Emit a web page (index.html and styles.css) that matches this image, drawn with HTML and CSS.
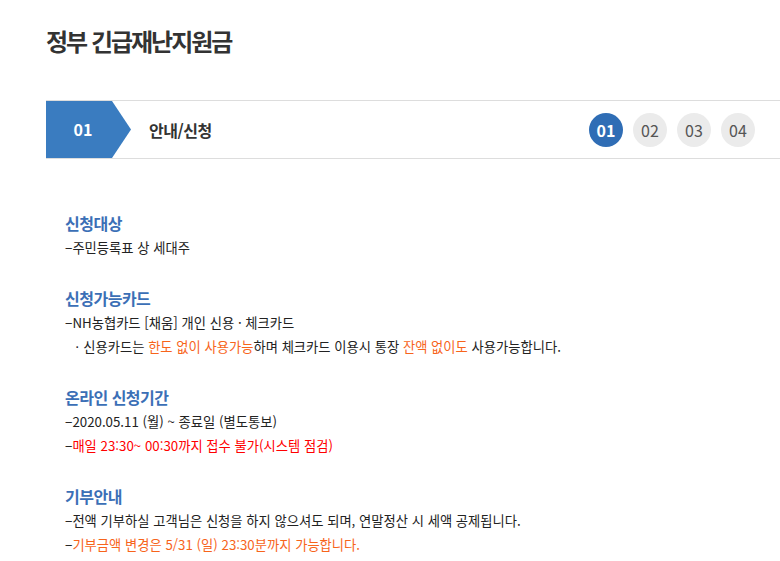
FILE: index.html
```html
<!DOCTYPE html>
<html lang="ko">
<head>
    <meta charset="utf-8" />
    <title>정부 긴급재난지원금</title>
    <link rel="stylesheet" href="styles.css">
</head>
<body>
    <div class="wrap">
        <h1 class="page-title">정부 긴급재난지원금</h1>

        <div class="step-bar">
            <div class="step-no">01</div>
            <div class="step-name">안내/신청</div>
            <ul class="step-list">
                <li class="on">01</li>
                <li>02</li>
                <li>03</li>
                <li>04</li>
            </ul>
        </div>

        <div class="guide">
            <div class="sec">
                <h2>신청대상</h2>
                <p>−주민등록표 상 세대주</p>
            </div>
            <div class="sec">
                <h2>신청가능카드</h2>
                <p>−NH농협카드 [채움] 개인 신용 · 체크카드</p>
                <p class="sub">ㆍ신용카드는 <span class="orange">한도 없이 사용가능</span>하며 체크카드 이용시 통장 <span class="orange">잔액 없이도</span> 사용가능합니다.</p>
            </div>
            <div class="sec">
                <h2>온라인 신청기간</h2>
                <p>−2020.05.11 (월) ~ 종료일 (별도통보)</p>
                <p>−<span class="red">매일 23:30~ 00:30까지 접수 불가(시스템 점검)</span></p>
            </div>
            <div class="sec">
                <h2>기부안내</h2>
                <p>−전액 기부하실 고객님은 신청을 하지 않으셔도 되며, 연말정산 시 세액 공제됩니다.</p>
                <p>−<span class="orange">기부금액 변경은 5/31 (일) 23:30분까지 가능합니다.</span></p>
            </div>
        </div>
    </div>
</body>
</html>
```

FILE: styles.css
```css
body {
    margin: 0;
    font-family: "Noto Sans CJK KR", "Noto Sans", sans-serif;
    color: #222;
    background: #fff;
}

.wrap {
    padding: 24px 0 0 46px;
}

.page-title {
    margin: 0 0 42px 0;
    font-size: 24px;
    line-height: 34px;
    font-weight: bold;
    letter-spacing: -2px;
    color: #333;
}

.step-bar {
    display: flex;
    align-items: center;
    height: 57px;
    border-top: 1px solid #ddd;
    border-bottom: 1px solid #ddd;
}

.step-no {
    width: 74px;
    padding-right: 11px;
    height: 57px;
    line-height: 57px;
    text-align: center;
    background-color: #3a7cc0;
    clip-path: polygon(0 0, 66px 0, 85px 50%, 66px 100%, 0 100%);
    color: #fff;
    font-size: 16px;
    font-weight: bold;
}

.step-name {
    margin-left: 18px;
    font-size: 16px;
    font-weight: bold;
    letter-spacing: -0.5px;
    color: #333;
}

.step-list {
    display: flex;
    gap: 10px;
    margin: 0 0 0 auto;
    padding: 0 25px 0 0;
    list-style: none;
}

.step-list li {
    width: 34px;
    height: 34px;
    border-radius: 50%;
    background-color: #ebebeb;
    color: #555;
    font-size: 16px;
    line-height: 34px;
    text-align: center;
}

.step-list li.on {
    background-color: #2f6db5;
    color: #fff;
    font-weight: bold;
}

.guide {
    padding: 51px 0 0 19px;
}

.sec {
    margin-bottom: 25px;
}

.sec h2 {
    margin: 0;
    font-size: 16px;
    line-height: 26px;
    font-weight: bold;
    letter-spacing: -0.5px;
    color: #3b6fb6;
}

.sec p {
    margin: 0;
    font-size: 13.3px;
    line-height: 24px;
    color: #222;
}

.sec p.sub {
    padding-left: 6px;
}

.orange {
    color: #f7641b;
}

.red {
    color: #f00;
}
```
